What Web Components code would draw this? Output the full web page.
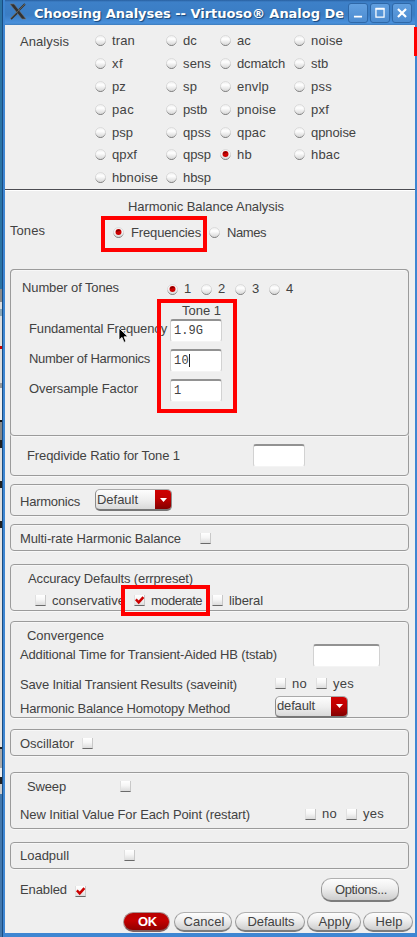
<!DOCTYPE html>
<html lang="en"><head><meta charset="utf-8"><title>Choosing Analyses</title>
<style>html,body{margin:0;background:#efefef}body{width:417px;height:937px;overflow:hidden}</style></head>
<body><analysis-window></analysis-window>
<script>
const define = (name, html, setup) => {
  const tpl = document.createElement('template');
  tpl.innerHTML = html;
  customElements.define(name, class extends HTMLElement {
    connectedCallback() {
      if (this.shadowRoot) return;
      this.attachShadow({ mode: 'open' }).append(tpl.content.cloneNode(true));
      if (setup) setup(this, this.shadowRoot);
    }
  });
};

/* Text run whose tracking is adjusted to fill the width in its "w" attribute. */
define('ui-text', `<style>
:host{display:block;flex:none;height:16px;font:13px/16px "Liberation Sans",sans-serif;color:#424242;white-space:pre}
:host([mono]){font:12px/16px "Liberation Mono",monospace}
:host([title-bar]){font:bold 13px/18px "DejaVu Sans",sans-serif;height:18px;color:#fff;text-shadow:1px 1px 1px #174476;overflow:hidden}
:host([strong]){font-weight:bold;color:#fff}
span{display:inline-block;margin-left:1px}
:host([flush]) span,:host([title-bar]) span{margin-left:0}
</style><span><slot></slot></span>`, (el, root) => {
  const w = +el.getAttribute('w'), s = root.querySelector('span'), n = el.textContent.length;
  if (!w) return;
  s.style.letterSpacing = (w - s.getBoundingClientRect().width) / n + 'px';
  el.style.width = w + 'px';
});

define('ui-radio', `<style>
:host{display:block;flex:none;width:11px;height:11px}
svg{display:block}.dot{display:none}:host([on]) .dot{display:block}
</style><svg width="11" height="11" viewBox="0 0 11 11"><defs>
<linearGradient id="g" x1="0" y1="0" x2="0" y2="1"><stop offset="0" stop-color="#ececec"/><stop offset=".35" stop-color="#fff"/><stop offset="1" stop-color="#d4d4d4"/></linearGradient>
<linearGradient id="e" x1="0" y1="0" x2="0" y2="1"><stop offset="0" stop-color="#dadada"/><stop offset=".55" stop-color="#cfcfcf"/><stop offset="1" stop-color="#6c6c6c"/></linearGradient></defs>
<circle cx="5.5" cy="5.5" r="5" fill="url(#g)" stroke="url(#e)" stroke-width=".9"/>
<g class="dot"><circle cx="5.5" cy="5" r="3" fill="#cc0000"/><path d="M3 5a2.6 2.6 0 0 1 4.6-1.5z" fill="#820000"/></g></svg>`);

define('ui-check', `<style>
:host{display:block;flex:none;width:11px;height:11px;box-sizing:border-box;background:linear-gradient(#fff,#f6f6f6 45%,#dcdcdc);border-bottom:1px solid #6a6a6a;border-right:1px solid #c8c8c8;border-left:1px solid #e0e0e0}
svg{display:none}:host([on]) svg{display:block}
</style><svg width="10" height="10" viewBox="0 0 10 10"><path d="M.8 4.4 3.7 7.4 8.4 2.2" fill="none" stroke="#cc0000" stroke-width="2.5"/></svg>`);

define('ui-field', `<style>
:host{display:flex;flex:none;box-sizing:border-box;width:52px;height:23px;padding:2px 0 0 3px;align-items:center;background:#fff;border:1px solid #d2d2d2;border-top:2px solid #929292;border-bottom-color:#f4f4f4;border-radius:3px}
:host([caret]) i{display:block;width:1px;height:13px;margin-top:-4px;background:#222}
i{display:none}</style><slot></slot><i></i>`);

define('ui-combo', `<style>
:host{display:flex;flex:none;box-sizing:border-box;height:22px;border:1px solid #8c8c8c;border-top-color:#aaa;border-bottom:2px solid #777;border-radius:5px;background:linear-gradient(#fdfdfd,#efefef 50%,#d9d9d9);overflow:hidden;align-items:center}
b{display:flex;width:16px;height:100%;margin-left:auto;align-items:center;justify-content:center;background:linear-gradient(#cf0000,#c00000 45%,#820000)}
</style><slot></slot><b><svg width="7" height="4"><path d="M0 0h7L3.5 4z" fill="#fff"/></svg></b>`);

define('ui-button', `<style>
:host{display:flex;flex:none;box-sizing:border-box;height:20px;align-items:center;justify-content:center;border:1px solid #999;border-top-color:#b0b0b0;border-bottom:2px solid #7c7c7c;border-radius:10px;background:linear-gradient(#fdfdfd,#eee 45%,#cdcdcd)}
:host([primary]){background:linear-gradient(#b80000,#c40000 45%,#900000);border-color:#a89090;border-bottom-color:#806060}
</style><slot></slot>`);

define('ui-row', `<style>:host{display:flex;flex:none;align-items:center}</style><slot></slot>`);

define('ui-panel', `<style>
:host{display:flex;flex:none;flex-direction:column;box-sizing:border-box;width:399px;margin-left:5px;border:1px solid #9b9b9b;border-radius:4px;box-shadow:inset 0 1px #f7f7f7,0 1px #f8f8f8}
</style><slot></slot>`);

define('title-bar', `<style>
:host{display:flex;box-sizing:border-box;height:25px;padding:3px 3px 0 4px;background:linear-gradient(#285f9f 0,#3d80c8 2px,#3a7dc4 60%,#4a91dc 92%,#3e7cbd)}
svg{flex:none;display:block}.x{margin:0 7px 0 0}ui-text{margin-top:2px}
.btns{display:flex;gap:2px;margin-left:auto}
.btns svg{border:1px solid #2e68a8;border-radius:3px;background:linear-gradient(#62a0e0,#4b8bd0);box-sizing:border-box}
</style>
<svg class="x" width="18" height="18" viewBox="0 0 18 18"><path d="M1 1h4l12 15h-4z" fill="#313131" stroke="#777" stroke-width=".6"/><path d="M16 1 10 7M8 10 2 16" stroke="#343434" stroke-width="1.8"/><path d="M16 1 1 16" stroke="#817a68" stroke-width=".6"/></svg>
<ui-text title-bar w="310">Choosing Analyses -- Virtuoso® Analog De</ui-text>
<div class="btns">
<svg width="20" height="20" viewBox="0 0 20 20"><path d="M5.5 14h9" stroke="#fff" stroke-width="2"/></svg>
<svg width="20" height="20" viewBox="0 0 20 20"><path d="M5.5 5.5h9v9h-9z" fill="none" stroke="#fff" stroke-width="1.4"/><path d="M5 5.2h10" stroke="#fff" stroke-width="2"/></svg>
<svg width="20" height="20" viewBox="0 0 20 20"><path d="m5.5 5.5 9 9m0-9-9 9" stroke="#fff" stroke-width="2.4"/></svg>
</div>`);

const st = (ml, mt = 0, more = '') => `style="margin-left:${ml}px;margin-top:${mt}px;${more}"`;
const T = (s, ml, w, mt = 0, a = '') => `<ui-text ${a} w="${w}" ${st(ml, mt)}>${s}</ui-text>`;
const R = (ml, on = '', mt = 0) => `<ui-radio ${on} ${st(ml, mt)}></ui-radio>`;
const C = (ml, on = '', mt = 0) => `<ui-check ${on} ${st(ml, mt)}></ui-check>`;
const row = (h, body, mt = 0) => `<ui-row style="height:${h}px;margin-top:${mt}px">${body}</ui-row>`;
const panel = (mt, h, body) => `<ui-panel style="height:${h}px;margin-top:${mt}px">${body}</ui-panel>`;

const kinds = [
  ['tran',22],['dc',13],['ac',13],['noise',31], ['xf',10],['sens',27],['dcmatch',47],['stb',16],
  ['pz',13],['sp',13],['envlp',31],['pss',20], ['pac',21],['pstb',23],['pnoise',38],['pxf',17],
  ['psp',20],['qpss',27],['qpac',28],['qpnoise',44], ['qpxf',24],['qpsp',27],['hb',14],['hbac',28],
  ['hbnoise',45],['hbsp',27]
];
define('analysis-grid', `<style>
:host{display:grid;grid-template-columns:90px 71px 54px 74px 1fr;grid-auto-rows:22.8px;padding-top:5px;border-bottom:1px solid #4c4c52;box-shadow:0 1px #fff;box-sizing:border-box;height:165px}
ui-text.l{grid-row:1/8;margin:4px 0 0 14px}
</style><ui-text class="l" w="49">Analysis</ui-text>` +
  kinds.map(([n, w], i) => `<ui-row style="grid-column:${i % 4 + 2}">${R(0, n === 'hb' ? 'on' : '', -1)}${T(n, 5, w + 1)}</ui-row>`).join(''));

define('analysis-window', `<style>
:host{display:grid;grid-template-columns:2px 1fr;position:relative;width:417px;height:937px;overflow:hidden}
.desk{background:linear-gradient(#2b74a5 0 289px,#8b8b8b 289px 302px,#ddd 302px 309px,#8aa7b8 309px 316px,#ddd 316px 346px,#c00 346px 349px,#ddd 349px 383px,#999 383px 388px,#eee 388px 420px,#111 420px 422px,#888 422px 440px,#222 440px 448px,#ddd 448px 481px,#222 481px 488px,#ddd 488px 521px,#222 521px 528px,#e4e4e4 528px 747px,#222 747px 749px,#aaa 749px 768px,#eee 768px 777px,#222 777px 784px,#ccc 784px 794px,#4378ad 794px)}
.frame{box-sizing:border-box;height:937px;border:solid #3e86d2;border-width:0 2px 4px 2px;margin-left:1px;outline:1px solid #194d83}
.body{display:flex;flex-direction:column;height:908px;background:#efefef}
.mark{position:absolute;box-sizing:border-box;border:4px solid #f00}
.bar{position:absolute;left:414px;top:27px;width:3px;height:29px;background:#f00}
.ptr{position:absolute;left:118px;top:327px}
</style>
<div class="desk"></div>
<div class="frame"><title-bar></title-bar><div class="body">
<analysis-grid></analysis-grid>
${row(16, T('Harmonic Balance Analysis', 122, 156), 9)}
${row(24, T('Tones', 4, 35, -5) + R(69, 'on', -1) + T('Frequencies', 6, 70, -1) + R(9, '', -1) + T('Names', 6, 39, -1), 6)}
${panel(24, 207, `<ui-panel style="height:167px;margin:-1px 0 0 -1px">
${row(24, T('Number of Tones', 10, 97, -3) + R(49, 'on') + T('1', 5, 8) + R(10) + T('2', 5, 8) + R(10) + T('3', 5, 8) + R(10) + T('4', 5, 8), 7)}
${row(16, T('Tone 1', 170, 39, 1), 1)}
${[['Fundamental Frequency', 138, '1.9G', 29, ''], ['Number of Harmonics', 121, '10', 15, 'caret'], ['Oversample Factor', 109, '1', 8, '']]
  .map(([s, w, v, vw, c], i) => row(23, T(s, 17, w, -3) + `<ui-field ${c} ${st(142 - w)}>${T(v, 0, vw, -3, 'mono flush')}</ui-field>`, i ? 7 : 1)).join('')}
</ui-panel>
${row(23, T('Freqdivide Ratio for Tone 1', 15, 153) + `<ui-field ${st(74)}></ui-field>`, 8)}`)}
${panel(8, 32, row(30, T('Harmonics', 8, 60, 4) + `<ui-combo ${st(16, 0, 'width:77px')}>${T('Default', 1, 41, 0, 'flush')}</ui-combo>`))}
${panel(8, 27, row(25, T('Multi-rate Harmonic Balance', 8, 161, 2) + C(20, '', 1)))}
${panel(13, 47, row(16, T('Accuracy Defaults (errpreset)', 16, 165), 6) + row(16, C(24) + T('conservative', 5, 73, 1) + C(10, 'on') + T('moderate', 5, 51, 1) + C(11) + T('liberal', 5, 34, 1), 5))}
${panel(10, 97, row(16, T('Convergence', 15, 77), 6)
  + row(24, T('Additional Time for Transient-Aided HB (tstab)', 8, 257) + `<ui-field ${st(37, 0, 'width:67px')}></ui-field>`, -1)
  + row(16, T('Save Initial Transient Results (saveinit)', 8, 217, 1) + C(39, '', -1) + T('no', 5, 15) + C(10, '', -1) + T('yes', 5, 21), 9)
  + row(22, T('Harmonic Balance Homotopy Method', 8, 210, 5) + `<ui-combo ${st(46, 1, 'width:73px')}>${T('default', 1, 38, 0, 'flush')}</ui-combo>`, 3))}
${panel(11, 27, row(25, T('Oscillator', 8, 54, 2) + C(9, '', 2)))}
${panel(16, 57, row(16, T('Sweep', 15, 39) + C(55, '', -1), 6) + row(16, T('New Initial Value For Each Point (restart)', 8, 230, 1) + C(56) + T('no', 5, 15) + C(10) + T('yes', 5, 21), 11))}
${panel(13, 27, row(25, T('Loadpull', 8, 49, 1) + C(56)))}
${row(24, T('Enabled', 14, 47) + C(9, 'on', 3) + `<ui-button ${st(235, 0, 'width:78px;height:24px')}>${T('Options...', 0, 52)}</ui-button>`, 9)}
${row(20, `<ui-button primary ${st(118, 0, 'width:47px')}>${T('OK', 0, 19, 0, 'strong')}</ui-button>`
  + [['Cancel', 4, 58, 41], ['Defaults', 3, 70, 47], ['Apply', 2, 54, 33], ['Help', 2, 50, 27]]
  .map(([s, ml, w, tw]) => `<ui-button ${st(ml, 0, `width:${w}px`)}>${T(s, 0, tw)}</ui-button>`).join(''), 10)}
</div></div>
<div class="bar"></div>
<div class="mark" style="left:101px;top:216px;width:106px;height:36px"></div>
<div class="mark" style="left:157px;top:299px;width:80px;height:114px"></div>
<div class="mark" style="left:121px;top:585px;width:89px;height:31px"></div>
<svg class="ptr" width="12" height="18" viewBox="0 0 12 18"><path d="M1 1v12l3-2.6 2 5 2-1-2-4.6h4z" fill="#000" stroke="#fff" stroke-width=".8"/></svg>`);
</script></body></html>
